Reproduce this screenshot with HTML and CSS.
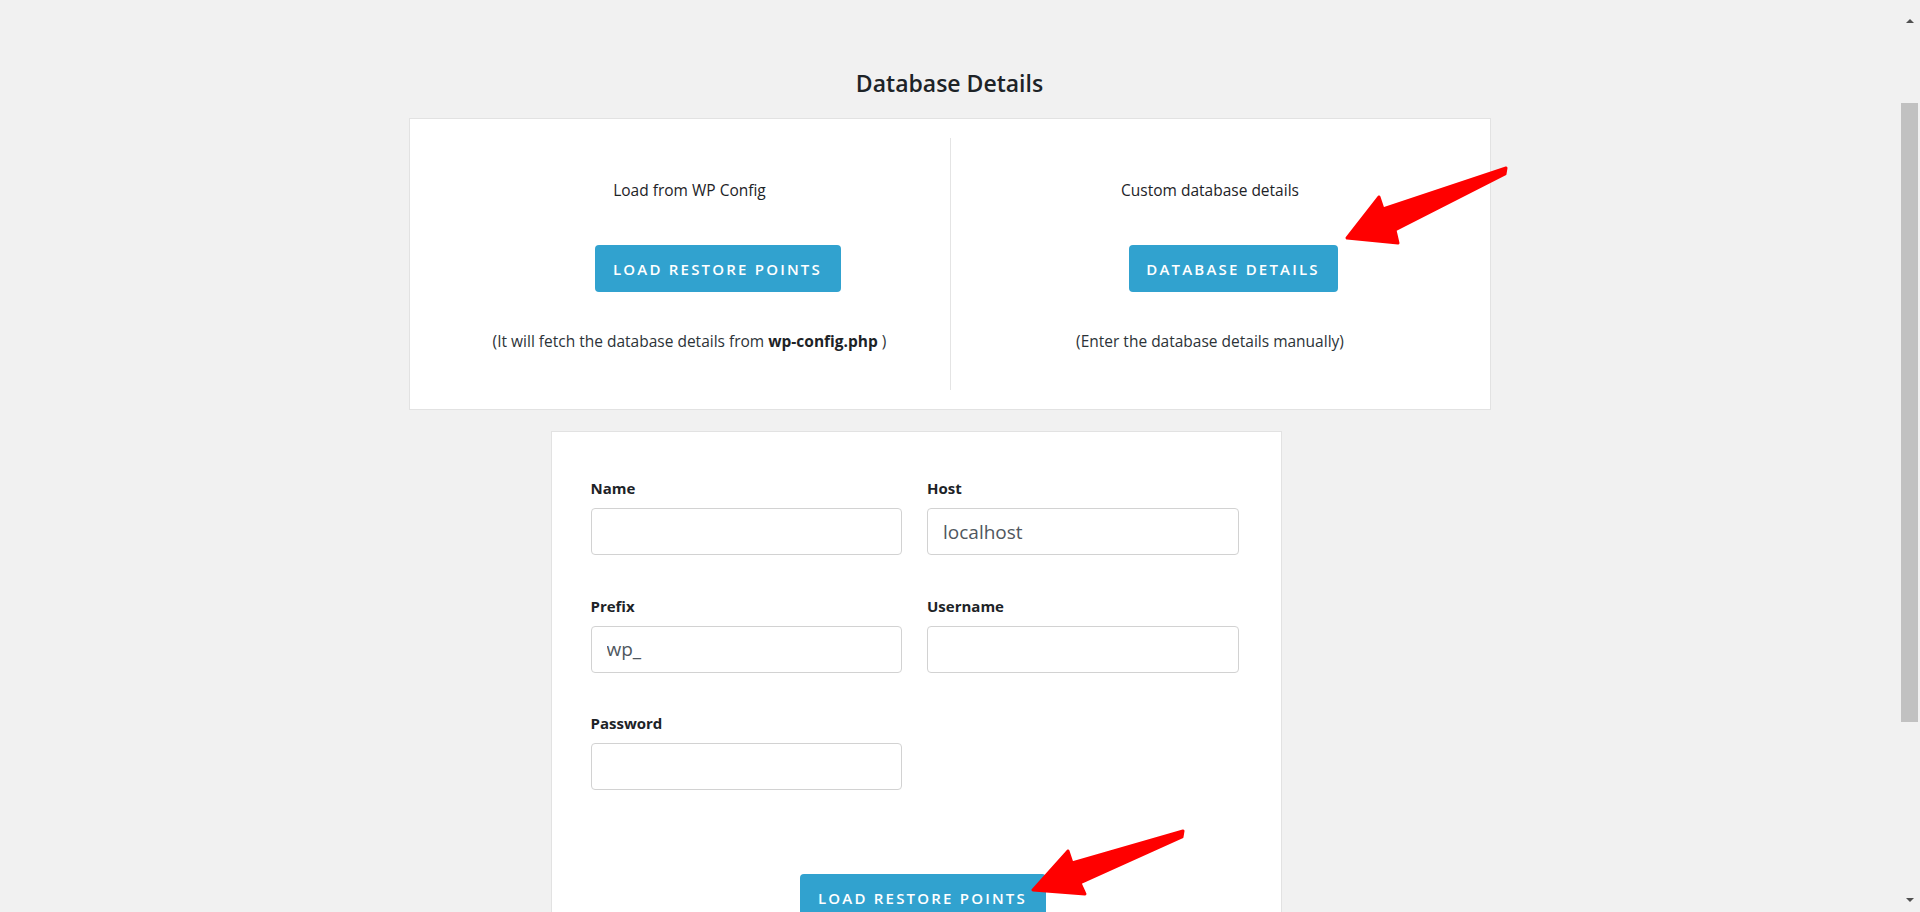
FILE: index.html
```html
<!DOCTYPE html>
<html lang="en">
<head>
<meta charset="utf-8">
<title>Database Details</title>
<link rel="stylesheet" href="styles.css">
</head>
<body>
<div class="page">
  <main class="main">
    <h2 class="title">Database Details</h2>
    <div class="wrap">
      <section class="choice-card">
        <div class="choice">
          <p class="choice-label">Load from WP Config</p>
          <button class="btn btn-left" type="button">LOAD RESTORE POINTS</button>
          <p class="choice-desc">(It will fetch the database details from <strong>wp-config.php</strong> )</p>
        </div>
        <div class="choice choice-right">
          <p class="choice-label">Custom database details</p>
          <button class="btn btn-right" type="button">DATABASE DETAILS</button>
          <p class="choice-desc">(Enter the database details manually)</p>
        </div>
      </section>
      <section class="form-card">
        <div class="fields">
          <div class="field">
            <label class="field-label">Name</label>
            <input class="field-input" type="text" value="">
          </div>
          <div class="field">
            <label class="field-label">Host</label>
            <input class="field-input" type="text" value="localhost">
          </div>
          <div class="field">
            <label class="field-label">Prefix</label>
            <input class="field-input" type="text" value="wp_">
          </div>
          <div class="field">
            <label class="field-label">Username</label>
            <input class="field-input" type="text" value="">
          </div>
          <div class="field">
            <label class="field-label">Password</label>
            <input class="field-input" type="password" value="">
          </div>
        </div>
        <button class="btn btn-submit" type="button">LOAD RESTORE POINTS</button>
      </section>
    </div>
  </main>
  <div class="scrollbar">
    <span class="sb-up"></span>
    <span class="sb-thumb"></span>
    <span class="sb-fill"></span>
    <span class="sb-down"></span>
  </div>
</div>
<svg class="annotations" viewBox="0 0 1920 912" width="1920" height="912" aria-hidden="true">
  <polygon class="arrow" points="1506,168 1383,209 1379,197 1347,238 1398,243 1395,230 1505,174"/>
  <polygon class="arrow" points="1183,831 1072,863 1068,851 1033,890 1085,894 1080,883 1182,837"/>
</svg>
</body>
</html>
```
FILE: styles.css
```css
* { box-sizing: border-box; }

html, body {
  margin: 0;
  padding: 0;
  height: 912px;
  overflow: hidden;
}

body {
  background: #f1f1f1;
  font-family: "Open Sans", "Noto Sans", "Liberation Sans", sans-serif;
  color: #1d2327;
}

.page {
  display: flex;
  height: 912px;
}

.main {
  flex: 1;
  display: flex;
  flex-direction: column;
  align-items: center;
  overflow: hidden;
}

.title {
  margin: 68px 0 20px;
  font-size: 23px;
  line-height: 30px;
  font-weight: 600;
  color: #1d2327;
}

.wrap {
  width: 1082px;
}

.choice-card {
  display: grid;
  grid-template-columns: 1fr 1fr;
  height: 292px;
  padding: 19px 20px;
  background: #fff;
  border: 1px solid #e2e2e2;
}

.choice {
  display: flex;
  flex-direction: column;
  align-items: center;
}

.choice-right {
  border-left: 1px solid #e4e4e4;
}

.choice-label {
  margin: 40px 0 0;
  font-size: 15.5px;
  line-height: 24px;
  font-weight: 500;
  color: #1d2327;
}

.choice-desc {
  margin: 37px 0 0;
  font-size: 15.5px;
  line-height: 24px;
  color: #2c3338;
}

.choice-desc strong {
  font-weight: 700;
  color: #1d2327;
}

.btn {
  display: block;
  height: 47px;
  padding: 0 12px;
  border: none;
  border-radius: 4px;
  background: #31a2cf;
  color: #fff;
  font-family: "Open Sans", "Noto Sans", "Liberation Sans", sans-serif;
  font-size: 15px;
  font-weight: 600;
  letter-spacing: 2.2px;
  cursor: pointer;
}

.btn-left {
  width: 246px;
  margin: 43px 0 0 56px;
}

.btn-right {
  width: 209px;
  margin: 43px 0 0 46px;
}

.form-card {
  width: 731px;
  height: 500px;
  margin: 21px 0 0 142px;
  padding: 46px 42px 0 39px;
  background: #fff;
  border: 1px solid #e2e2e2;
}

.fields {
  display: grid;
  grid-template-columns: 1fr 1fr;
  column-gap: 25px;
  row-gap: 40.5px;
}

.field {
  display: flex;
  flex-direction: column;
}

.field-label {
  font-size: 15px;
  line-height: 20px;
  font-weight: 700;
  color: #1d2327;
  margin-bottom: 10px;
}

.field-input {
  height: 47px;
  padding: 0 15px;
  border: 1px solid #d2d2d2;
  border-radius: 4px;
  background: #fff;
  font-family: "Open Sans", "Noto Sans", "Liberation Sans", sans-serif;
  font-size: 19px;
  color: #50575e;
  outline: none;
}

.btn-submit {
  width: 246px;
  margin: 84px 0 0 209px;
}

.scrollbar {
  width: 21px;
  display: flex;
  flex-direction: column;
  align-items: center;
  background: #f1f1f1;
}

.sb-up {
  margin-top: 19px;
  width: 0;
  height: 0;
  border-left: 4px solid transparent;
  border-right: 4px solid transparent;
  border-bottom: 4px solid #505050;
}

.sb-thumb {
  margin-top: 80px;
  width: 17px;
  height: 619px;
  background: #c1c1c1;
}

.sb-fill { flex: 1; }

.sb-down {
  margin-bottom: 10px;
  width: 0;
  height: 0;
  border-left: 4px solid transparent;
  border-right: 4px solid transparent;
  border-top: 4px solid #505050;
}

.annotations {
  position: fixed;
  left: 0;
  top: 0;
  pointer-events: none;
}

.arrow {
  fill: #ff0000;
  stroke: #ff0000;
  stroke-width: 3;
  stroke-linejoin: round;
}
```
